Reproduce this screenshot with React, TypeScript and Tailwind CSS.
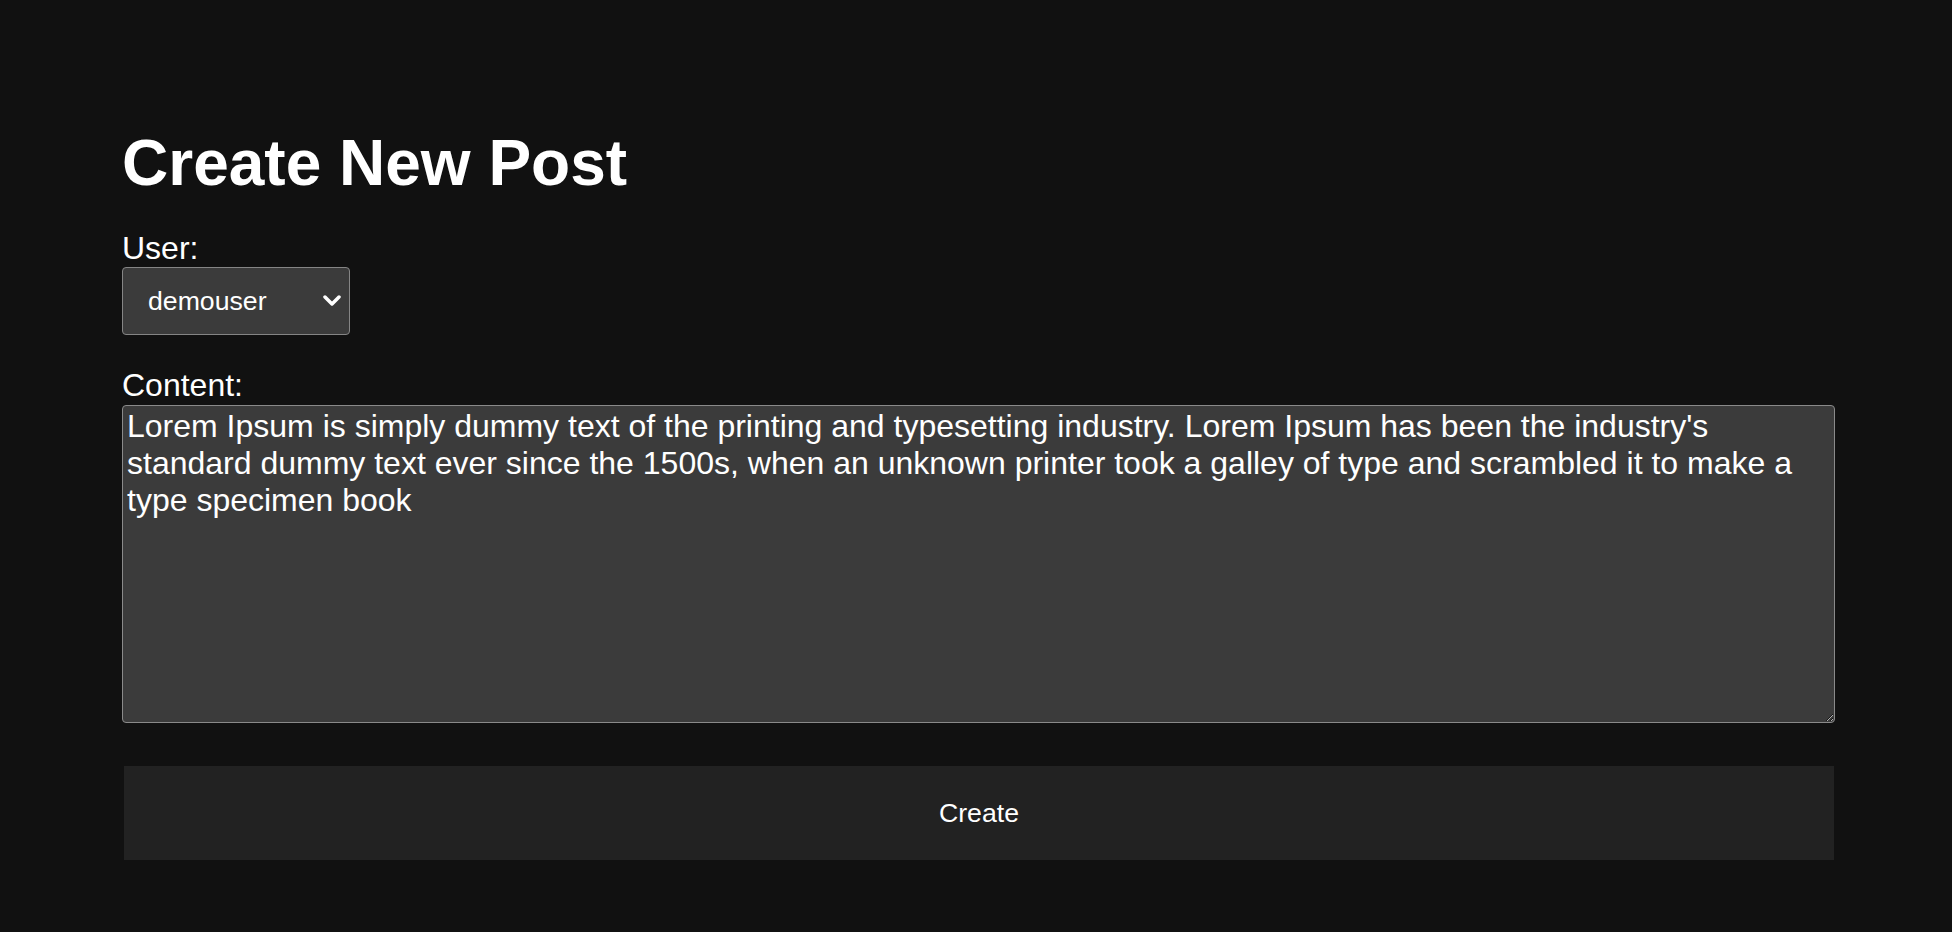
import React, { useState } from 'react';

const users = ['demouser', 'admin', 'guest'];

const initialContent =
  "Lorem Ipsum is simply dummy text of the printing and typesetting industry. Lorem Ipsum has been the industry's standard dummy text ever since the 1500s, when an unknown printer took a galley of type and scrambled it to make a type specimen book";

const App: React.FC = () => {
  const [user, setUser] = useState(users[0]);
  const [content, setContent] = useState(initialContent);

  const handleSubmit = (e: React.FormEvent) => {
    e.preventDefault();
  };

  return (
    <div className="min-h-screen bg-[#111111] text-white font-['Liberation_Sans',Arial,sans-serif] pl-[122px] pr-[117px] pt-[127px] pb-[72px]">
      <h1 className="text-[64px] font-bold leading-[72px]">Create New Post</h1>

      <form onSubmit={handleSubmit} className="flex flex-col">
        <label htmlFor="user" className="mt-[31px] text-[32px] leading-[37px]">
          User:
        </label>
        <div className="relative w-[228px]">
          <select
            id="user"
            value={user}
            onChange={(e) => setUser(e.target.value)}
            className="block h-[68px] w-full appearance-none rounded-[4px] border border-[#858585] bg-[#3b3b3b] pl-[25px] pr-10 text-[26.67px] text-white outline-none"
          >
            {users.map((u) => (
              <option key={u} value={u}>
                {u}
              </option>
            ))}
          </select>
          <svg
            className="pointer-events-none absolute left-[201px] top-[28px]"
            width="18"
            height="12"
            viewBox="0 0 18 12"
            fill="none"
          >
            <polyline
              points="2,2 9,9 16,2"
              stroke="white"
              strokeWidth="3.5"
              strokeLinecap="round"
              strokeLinejoin="round"
            />
          </svg>
        </div>

        <label htmlFor="content" className="mt-[32px] text-[32px] leading-[37px]">
          Content:
        </label>
        <textarea
          id="content"
          value={content}
          onChange={(e) => setContent(e.target.value)}
          className="mt-px block h-[318px] w-full rounded-[4px] border border-[#8a8a8a] bg-[#3b3b3b] px-[4px] pt-[2px] text-[32px] leading-[1.15] text-white outline-none"
        />

        <button
          type="submit"
          className="mt-[43px] ml-[2px] mr-[1px] h-[94px] bg-[#222222] text-[26.67px] text-white"
        >
          Create
        </button>
      </form>
    </div>
  );
};

export default App;
